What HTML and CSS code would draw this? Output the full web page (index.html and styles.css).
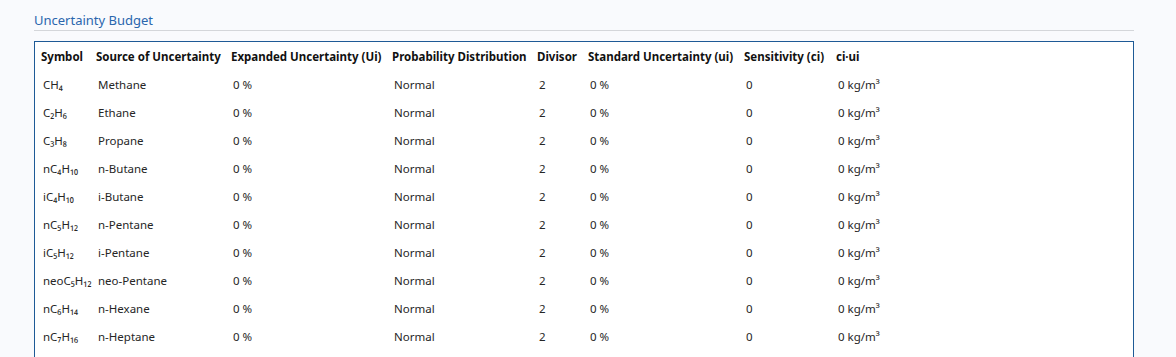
FILE: index.html
```html
<!DOCTYPE html>
<html>
<head>
<meta charset="utf-8">
<link rel="stylesheet" href="styles.css">
</head>
<body>
<div class="panel">
  <div class="title">Uncertainty Budget</div>
  <div class="box">
    <table class="budget">
      <colgroup>
        <col class="c1"><col class="c2"><col class="c3"><col class="c4"><col class="c5"><col class="c6"><col class="c7"><col class="c8">
      </colgroup>
      <thead>
        <tr><th>Symbol</th><th>Source of Uncertainty</th><th>Expanded Uncertainty (Ui)</th><th>Probability Distribution</th><th>Divisor</th><th>Standard Uncertainty (ui)</th><th>Sensitivity (ci)</th><th>ci·ui</th></tr>
      </thead>
      <tbody>
        <tr><td>CH₄</td><td>Methane</td><td>0 %</td><td>Normal</td><td>2</td><td>0 %</td><td>0</td><td>0 kg/m³</td></tr>
        <tr><td>C₂H₆</td><td>Ethane</td><td>0 %</td><td>Normal</td><td>2</td><td>0 %</td><td>0</td><td>0 kg/m³</td></tr>
        <tr><td>C₃H₈</td><td>Propane</td><td>0 %</td><td>Normal</td><td>2</td><td>0 %</td><td>0</td><td>0 kg/m³</td></tr>
        <tr><td>nC₄H₁₀</td><td>n-Butane</td><td>0 %</td><td>Normal</td><td>2</td><td>0 %</td><td>0</td><td>0 kg/m³</td></tr>
        <tr><td>iC₄H₁₀</td><td>i-Butane</td><td>0 %</td><td>Normal</td><td>2</td><td>0 %</td><td>0</td><td>0 kg/m³</td></tr>
        <tr><td>nC₅H₁₂</td><td>n-Pentane</td><td>0 %</td><td>Normal</td><td>2</td><td>0 %</td><td>0</td><td>0 kg/m³</td></tr>
        <tr><td>iC₅H₁₂</td><td>i-Pentane</td><td>0 %</td><td>Normal</td><td>2</td><td>0 %</td><td>0</td><td>0 kg/m³</td></tr>
        <tr><td>neoC₅H₁₂</td><td>neo-Pentane</td><td>0 %</td><td>Normal</td><td>2</td><td>0 %</td><td>0</td><td>0 kg/m³</td></tr>
        <tr><td>nC₆H₁₄</td><td>n-Hexane</td><td>0 %</td><td>Normal</td><td>2</td><td>0 %</td><td>0</td><td>0 kg/m³</td></tr>
        <tr><td>nC₇H₁₆</td><td>n-Heptane</td><td>0 %</td><td>Normal</td><td>2</td><td>0 %</td><td>0</td><td>0 kg/m³</td></tr>
      </tbody>
    </table>
  </div>
</div>
</body>
</html>
```
FILE: styles.css
```css
html, body {
  margin: 0;
  padding: 0;
  background: #f9fafd;
  font-family: "Noto Sans", "Open Sans", "DejaVu Sans", sans-serif;
}
.panel {
  padding: 11px 0 0 34px;
  width: 1100px;
}
.title {
  color: #2a66ad;
  font-size: 13px;
  line-height: 18px;
  padding-bottom: 1px;
  border-bottom: 1px solid #d4d6da;
}
.box {
  margin-top: 10px;
  background: #ffffff;
  border: 1px solid #1e5a96;
  height: 330px;
}
.budget {
  border-collapse: collapse;
  table-layout: fixed;
  width: 915px;
  font-size: 11.5px;
}
.c1 { width: 55px; }
.c2 { width: 135px; }
.c3 { width: 161px; }
.c4 { width: 145px; }
.c5 { width: 51px; }
.c6 { width: 156px; }
.c7 { width: 92px; }
.c8 { width: 120px; }
.budget th {
  height: 28px;
  padding: 0 0 0 6px;
  text-align: left;
  font-weight: 700;
  color: #111;
  white-space: nowrap;
}
.budget td {
  height: 28px;
  padding: 0 0 0 8px;
  color: #262626;
  white-space: nowrap;
}
```
